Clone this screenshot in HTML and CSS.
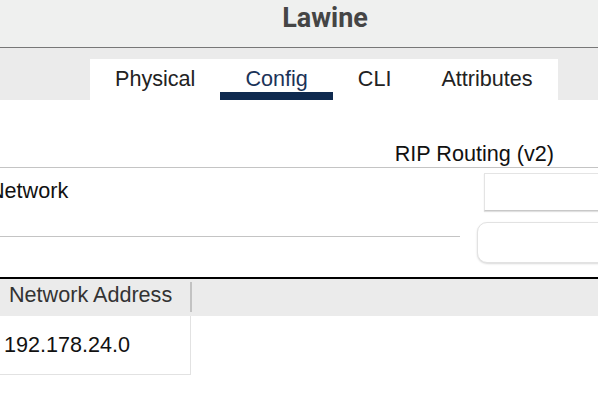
FILE: index.html
```html
<!DOCTYPE html>
<html>
<head>
<meta charset="utf-8">
<link rel="stylesheet" href="styles.css">
</head>
<body>
<div class="window">
  <div class="titlebar">Lawine</div>
  <div class="tabbar">
    <div class="tabs">
      <div class="tab">Physical</div>
      <div class="tab active">Config</div>
      <div class="tab">CLI</div>
      <div class="tab">Attributes</div>
    </div>
  </div>
  <div class="content">
    <div class="rip-head">RIP Routing (v2)</div>
    <div class="config-row">
      <div class="left">
        <div class="net-label">Network</div>
      </div>
      <div class="right">
        <div class="input"></div>
        <div class="button"></div>
      </div>
    </div>
    <div class="table">
      <div class="thead">
        <div class="th">Network Address</div>
        <div class="sep"></div>
      </div>
      <div class="tr">
        <div class="td">192.178.24.0</div>
      </div>
    </div>
  </div>
</div>
</body>
</html>
```
FILE: styles.css
```css
html, body {
  margin: 0;
  padding: 0;
  background: #ffffff;
  overflow: hidden;
}
.window {
  width: 598px;
  height: 404px;
  font-family: "Liberation Sans", Arial, sans-serif;
  font-size: 21.6px;
  color: #111;
  overflow: hidden;
}
.titlebar {
  height: 47px;
  box-sizing: content-box;
  background: #eff0ef;
  border-bottom: 1px solid #777;
  font-family: Roboto, "Liberation Sans", sans-serif;
  font-weight: 700;
  font-size: 27px;
  line-height: 36px;
  color: #454545;
  text-align: center;
  padding-left: 52px;
}
.tabbar {
  height: 41px;
  padding-top: 11px;
  padding-left: 90px;
  background: #ebebeb;
}
.tabs {
  display: flex;
  width: 468px;
  height: 41px;
  background: #fff;
}
.tab {
  padding: 0 25px;
  height: 41px;
  line-height: 39px;
  color: #222;
  white-space: nowrap;
}
.tab.active {
  color: #1b3358;
  box-shadow: inset 0 -8px 0 #0f2a4f;
}
.content {
  background: #fff;
}
.rip-head {
  height: 26px;
  padding-top: 41px;
  line-height: 26px;
  text-align: right;
  padding-right: 44px;
  border-bottom: 1px solid #c4c4c4;
}
.config-row {
  display: flex;
  height: 109px;
  border-bottom: 2px solid #000;
}
.left {
  flex: none;
  width: 460px;
  height: 68px;
  border-bottom: 1px solid #c4c4c4;
}
.net-label {
  padding-top: 10px;
  line-height: 26px;
  margin-left: -11px;
}
.right {
  flex: none;
  margin-left: 17px;
  display: flex;
  flex-direction: column;
}
.input {
  margin-top: 5px;
  margin-left: 7px;
  width: 140px;
  height: 38px;
  box-sizing: border-box;
  border: 1px solid #e4e4e4;
  border-bottom-color: #c8c8c8;
  box-shadow: 0 1px 1px rgba(0,0,0,0.12);
  background: #fff;
}
.button {
  margin-top: 11px;
  width: 150px;
  height: 41px;
  box-sizing: border-box;
  border: 1px solid #e2e2e2;
  border-radius: 10px;
  box-shadow: 0 1px 2px rgba(0,0,0,0.15);
  background: #fff;
}
.thead {
  display: flex;
  height: 37px;
  background: #ebebeb;
}
.th {
  width: 181px;
  padding-left: 9px;
  line-height: 31px;
  color: #333;
  white-space: nowrap;
}
.sep {
  width: 2px;
  height: 30px;
  margin-top: 3px;
  background: #c2c2c2;
}
.tr {
  display: flex;
}
.td {
  width: 186px;
  height: 42px;
  padding-left: 4px;
  padding-top: 16px;
  line-height: 26px;
  border-right: 1px solid #e2e2e2;
  border-bottom: 1px solid #e2e2e2;
  white-space: nowrap;
}
```
